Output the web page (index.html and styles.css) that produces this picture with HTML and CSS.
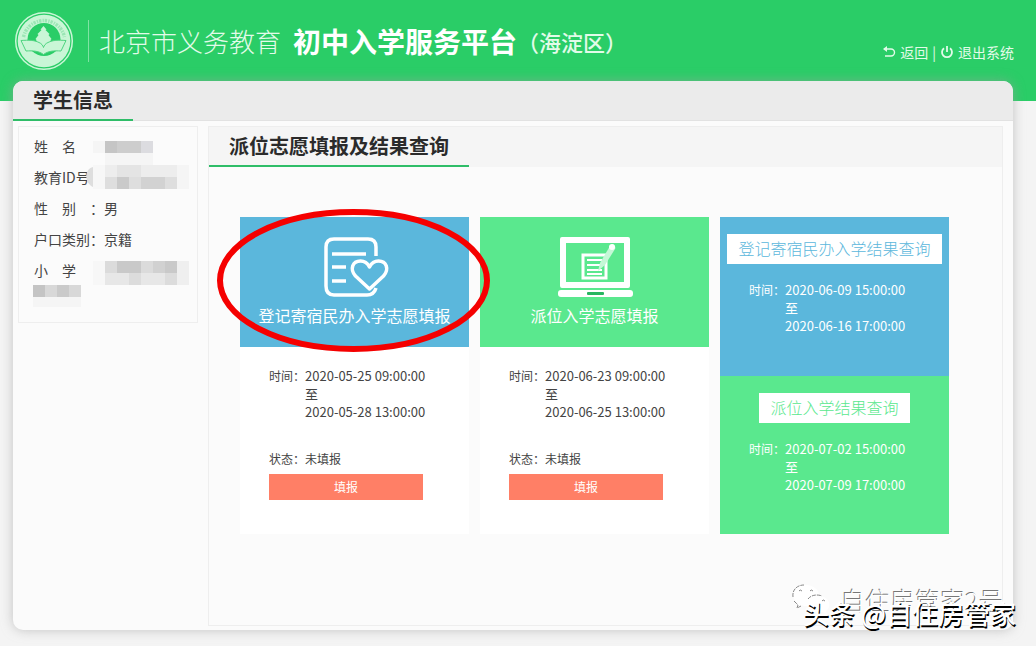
FILE: index.html
```
<!DOCTYPE html>
<html lang="zh-CN">
  <head>
    <meta charset="UTF-8" />
    <meta name="viewport" content="width=device-width, initial-scale=1.0" />
    <title>北京市义务教育初中入学服务平台</title>
    <link rel="stylesheet" href="styles.css">
  </head>
  <body>
    <header class="top">
      <svg class="logo" viewBox="0 0 60 60" aria-hidden="true">
        <circle cx="30" cy="30" r="28.3" fill="none" stroke="#c9f6d6" stroke-width="1.5"/>
        <circle cx="30" cy="30" r="26.3" fill="#c9f6d6"/>
        <path d="M9.500 26A21 21 0 0 1 50.500 26" fill="none" stroke="#9be6b5" stroke-width="3.500" stroke-dasharray="2.400 1.200 1.300 0.900"/>
        <circle cx="30" cy="28.500" r="16.500" fill="#2acd67"/>
        <path d="M29.500 15l3 3.500-1 .5 4 4-1 1 3 4-1 1 1 3-5 2h-1v3h-4v-3h-1l-5-2 1-3-1-1 3-4-1-1 4-4-1-.5z" fill="#c9f6d6"/>
        <path d="M7 29.500c8-.5 13-.5 18 2 2.500 1 4 3 4.500 5 .500-2 2-4 4.500-5 5-2.500 10-2.500 18-2l-5 10.500c-7-.5-13 0-17.500 3.500C25 40 19 39.500 12 40z" fill="#c9f6d6" stroke="#4fd581" stroke-width="1"/>
      </svg>
      <h1 class="title"><span class="title-light">北京市义务教育</span><span class="title-main">初中入学服务平台</span><span class="title-area">（海淀区）</span></h1>
      <nav class="links">
        <a href="#">
          <svg width="14" height="12" viewBox="0 0 14 12" fill="none" stroke="#e2fbe9" stroke-width="1.4"><path d="M2 3h7a3.500 3.500 0 0 1 0 7H3"/><path d="M5 0L1 3l4 3z" fill="#e2fbe9" stroke="none"/></svg>
          返回</a>
        <span>|</span>
        <a href="#">
          <svg width="14" height="14" viewBox="0 0 14 14" fill="none" stroke="#e2fbe9" stroke-width="1.800"><path d="M4 3.200a5 5 0 1 0 6 0M7 1v6"/></svg>
          退出系统</a>
      </nav>
    </header>

    <div class="panel">
      <div class="panel-head"><h2>学生信息</h2></div>
      <div class="panel-body">
        <aside class="student">
          <p>姓&emsp;名</p>
          <p>教育ID号</p>
          <p>性&emsp;别&emsp;：男</p>
          <p>户口类别：京籍</p>
          <p>小&emsp;学</p>
          <!-- masked personal data -->
          <svg class="mask" viewBox="0 0 180 197" shape-rendering="crispEdges" aria-hidden="true">
            <path fill="#f5f5f5" d="M75 15h12v12H75zM87 27h48v12H87zM159 39h12v24h-12zM15 171h48v10H15z"/>
            <path fill="#f7f7f7" d="M75 39h12v24H75zM75 135h12v24H75z"/>
            <path fill="#c5c5c5" d="M87 15h12v12H87z"/><path fill="#cdcdcd" d="M99 15h24v12H99z"/><path fill="#dcdce0" d="M123 15h12v12h-12z"/>
            <path fill="#ededed" d="M87 39h12v12H87zM123 39h36v12h-36z"/><path fill="#e4e4e4" d="M99 39h24v12H99z"/>
            <path fill="#dedede" d="M87 51h12v12H87zM111 51h12v12h-12zM147 51h12v12h-12z"/><path fill="#cacaca" d="M99 51h12v12H99z"/><path fill="#d2d2d2" d="M123 51h24v12h-24z"/>
            <path fill="#dedede" d="M75 41c-9 2-9 16 0 20z" shape-rendering="auto"/>
            <path fill="#dbdbdb" d="M87 135h12v12H87zM123 135h12v12h-12z"/><path fill="#c9c9c9" d="M99 135h24v12H99zM147 135h12v12h-12z"/><path fill="#d1d1d1" d="M135 135h12v12h-12z"/>
            <path fill="#e7e7e7" d="M87 147h24v12H87zM123 147h24v12h-24z"/><path fill="#dcdcdc" d="M111 147h12v12h-12zM147 147h12v12h-12z"/><path fill="#efefef" d="M159 135h12v24h-12z"/>
            <path fill="#c4c4c4" d="M15 159h12v12H15z"/><path fill="#d8d8d8" d="M27 159h12v12H27zM51 159h12v12H51z"/><path fill="#cacaca" d="M39 159h12v12H39z"/>
          </svg>
        </aside>

        <main class="main">
          <div class="main-head"><h2>派位志愿填报及结果查询</h2></div>
          <div class="cards">
            <section class="card">
              <div class="card-top blue">
                <svg class="card-icon" viewBox="0 0 76 64" fill="none" stroke="#fff" stroke-width="3.500">
                  <path d="M59 22V13Q59 5 51 5H17Q9 5 9 13V52Q9 61 17 61H50Q57 61 59 54"/>
                  <path d="M15 20h34M15 33h14M15 47h14"/>
                  <path d="M52.500 55L38.500 42C32.500 35 35.500 27 43.500 27Q49.500 27 52.500 33Q55.500 27 61.500 27C69.500 27 72.500 35 66.500 42Z" stroke-linejoin="round"/>
                </svg>
                <h3>登记寄宿民办入学志愿填报</h3>
              </div>
              <dl class="time"><dt>时间：</dt><dd>2020-05-25 09:00:00<br>至<br>2020-05-28 13:00:00</dd></dl>
              <p class="status">状态：未填报</p>
              <button class="fill" type="button">填报</button>
              <svg class="ring" viewBox="0 0 273 143" aria-hidden="true"><ellipse cx="136.500" cy="71.500" rx="133.500" ry="68.500" fill="none" stroke="#f50000" stroke-width="6"/></svg>
            </section>

            <section class="card">
              <div class="card-top green">
                <svg class="card-icon" viewBox="0 0 76 64">
                  <path d="M5 3h66q2 0 2 2v47q0 2-2 2H5q-2 0-2-2V5q0-2 2-2zM9 9v39h58V9z" fill="#fff" fill-rule="evenodd"/>
                  <rect x="1" y="56" width="75" height="7" rx="3" fill="#fff"/>
                  <rect x="30" y="58" width="17" height="3" rx="1" fill="#27b660"/>
                  <path d="M26 21h23v23H26z" fill="#5ae88e" stroke="#fff" stroke-width="3"/>
                  <path d="M30 26h15M30 31h14M30 36h15M30 40h15" stroke="#fff" stroke-width="2"/>
                  <path d="M41 37l2-8L53 12q2-3 4-1t1 4L48 31z" fill="#c5f8d7"/>
                  <circle cx="55" cy="13" r="3" fill="#fff"/>
                </svg>
                <h3>派位入学志愿填报</h3>
              </div>
              <dl class="time"><dt>时间：</dt><dd>2020-06-23 09:00:00<br>至<br>2020-06-25 13:00:00</dd></dl>
              <p class="status">状态：未填报</p>
              <button class="fill" type="button">填报</button>
            </section>

            <div class="results">
              <section class="result blue">
                <button class="query" type="button">登记寄宿民办入学结果查询</button>
                <dl class="time"><dt>时间：</dt><dd>2020-06-09 15:00:00<br>至<br>2020-06-16 17:00:00</dd></dl>
              </section>
              <section class="result green">
                <button class="query" type="button">派位入学结果查询</button>
                <dl class="time"><dt>时间：</dt><dd>2020-07-02 15:00:00<br>至<br>2020-07-09 17:00:00</dd></dl>
              </section>
            </div>
          </div>
        </main>
      </div>
    </div>

    <div class="wechat-mark">
      <svg width="42" height="34" viewBox="0 0 42 34" fill="#fff">
        <path d="M6 25l1-5C-3 13 3 2 14 2s17 8 13 15-13 7-16 5z"/>
        <path d="M36 31l-1-3c6-4 4-14-6-15s-16 8-10 14c4 3 9 3 12 2z"/>
        <path d="M2 14C1 7 6 2 13 2M3 18l4 4-1 3 4-2M17 16c3-4 9-5 14-3M8 8q1-2 3 0M19 8q1-2 3 0M31 18q1-2 3 0" fill="none" stroke="#888" stroke-dasharray="4 1"/>
      </svg>
      <span>自住房管家2号</span>
    </div>
    <div class="author-mark">头条 @自住房管家</div>
  </body>
</html>
```
FILE: styles.css
```
* {
  box-sizing: border-box;
}
body {
  margin: 0;
  min-height: 100vh;
  display: flex;
  flex-direction: column;
  position: relative;
  background: linear-gradient(#2acd67 101px, #f4f4f4 101px);
  color: #444;
  font-family: "Noto Sans CJK SC", sans-serif;
  font-size: 14px;
}
h1, h2, h3, p, dl, dd {
  margin: 0;
  font-weight: normal;
}
button {
  border: none;
  font-family: inherit;
}
.top {
  height: 81px;
  display: flex;
  align-items: center;
  padding: 0 22px 0 14px;
  color: #e2fbe9;
}
.logo {
  width: 60px;
  height: 60px;
}
.title {
  display: flex;
  align-items: center;
  height: 42px;
  margin-left: 14px;
  padding-left: 10px;
  border-left: 1px solid #7fe3a3;
  white-space: nowrap;
}
.title-light {
  font-size: 26px;
  font-weight: 300;
}
.title-main {
  margin-left: 12px;
  color: #fff;
  font-size: 28px;
  font-weight: bold;
}
.title-area {
  font-size: 22px;
  font-weight: 500;
}
.links {
  display: flex;
  gap: 4px;
  margin-left: auto;
  padding-top: 22px;
  white-space: nowrap;
}
.links a {
  display: flex;
  align-items: center;
  gap: 4px;
  color: inherit;
  text-decoration: none;
}

/* content panel */
.panel {
  flex: 1;
  display: flex;
  flex-direction: column;
  margin: 0 23px 16px 13px;
  border-radius: 10px;
  background: #fbfbfb;
  box-shadow: 0 0 12px rgba(160, 160, 160, 0.6);
}
.panel-head {
  height: 40px;
  border-radius: 10px 10px 0 0;
  border-bottom: 1px solid #e2e2e2;
  background: #ebebeb;
}
.panel-head h2,
.main-head h2 {
  width: 120px;
  height: 40px;
  padding-left: 20px;
  border-bottom: 2px solid #2fbd68;
  color: #2b2b2b;
  font-size: 20px;
  font-weight: bold;
  line-height: 38px;
}
.panel-body {
  flex: 1;
  display: flex;
  align-items: flex-start;
  gap: 10px;
  padding: 5px 10px 4px 5px;
}
.student {
  position: relative;
  width: 180px;
  height: 197px;
  padding: 4px 15px;
  border: 1px solid #eee;
  flex: none;
}
.student p {
  line-height: 31px;
  white-space: nowrap;
}
.mask {
  position: absolute;
  top: -1px;
  left: -1px;
  width: 180px;
  height: 197px;
}
.main {
  flex: 1;
  align-self: stretch;
  border: 1px solid #eee;
}
.main-head {
  background: #f5f5f5;
}
.main-head h2 {
  width: 260px;
}
.cards {
  display: grid;
  grid-template-columns: repeat(3, 1fr);
  gap: 11px;
  padding: 50px 53px 0 31px;
}
.card {
  position: relative;
  min-height: 317px;
  background: #fff;
}
.card-top {
  height: 130px;
  padding-top: 17px;
  text-align: center;
}
.blue {
  background: #5bb7dc;
  color: #fff;
}
.green {
  background: #5ae88e;
  color: #fff;
}
.card-icon {
  display: block;
  width: 76px;
  height: 64px;
  margin: 0 auto;
}
.card-top h3 {
  font-size: 16px;
  line-height: 34px;
  white-space: nowrap;
}
.time {
  display: flex;
  margin: 20px 0 0 29px;
  line-height: 18px;
  white-space: nowrap;
}
.time dt {
  font-size: 12px;
}
.time dd {
  font-size: 13px;
}
.status {
  margin: 27px 0 0 29px;
  font-size: 12px;
  line-height: 22px;
}
.fill {
  display: block;
  width: 154px;
  height: 26px;
  margin: 4px 0 0 29px;
  padding: 0 0 2px;
  background: #ff7f66;
  color: #fff;
  font-size: 12px;
}
.results {
  display: grid;
  grid-template-rows: 1fr 1fr;
}
.result {
  padding-top: 17px;
  text-align: center;
}
.result .time {
  margin-top: 17px;
  text-align: left;
}
.query {
  height: 30px;
  padding: 0 11px 2px;
  background: #fff;
  color: #5bb7dc;
  font-size: 16px;
  font-weight: 300;
  white-space: nowrap;
}
.green .query {
  color: #5ae88e;
}

/* hand-drawn highlight over the first card */
.ring {
  position: absolute;
  z-index: 1;
  top: -8px;
  left: -23px;
  width: 273px;
  height: 143px;
}

/* watermarks */
.wechat-mark,
.author-mark {
  position: absolute;
  color: #fff;
  white-space: nowrap;
}
.wechat-mark {
  right: 32px;
  bottom: 26px;
  display: flex;
  align-items: center;
  gap: 8px;
  font-size: 25px;
  font-weight: 300;
  line-height: 40px;
  text-shadow: -1px -1px 0 #777;
}
.author-mark {
  right: 20px;
  bottom: 13px;
  font-size: 26px;
  font-weight: 500;
  line-height: 40px;
  text-shadow: 1px 2px 0 #000;
}
```
